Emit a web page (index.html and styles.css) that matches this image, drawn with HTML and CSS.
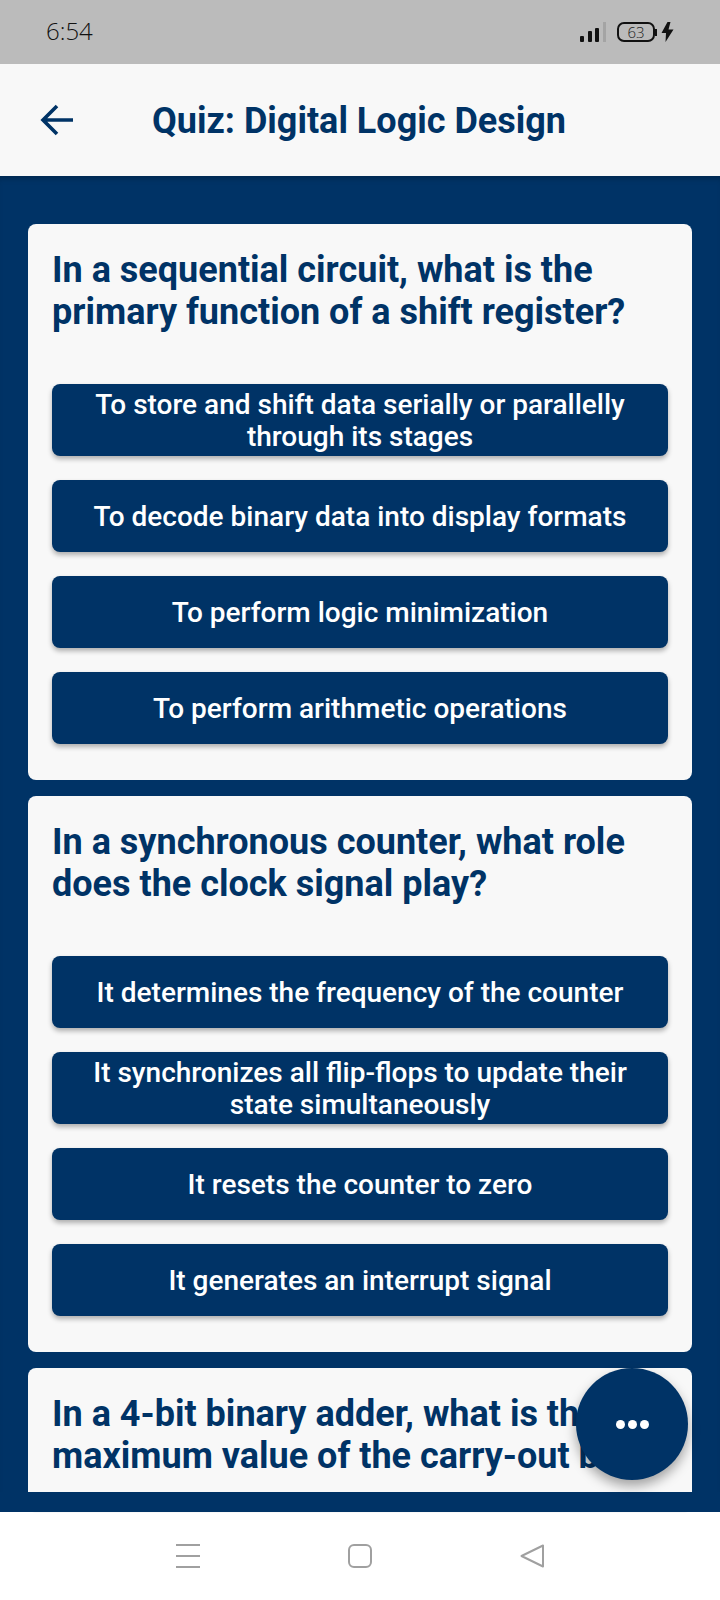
FILE: index.html
```html
<!DOCTYPE html>
<html lang="en">
<head>
<meta charset="utf-8">
<title>Quiz: Digital Logic Design</title>
<link rel="stylesheet" href="styles.css">
</head>
<body>
  <div class="screen">
    <div class="status">
      <span class="time">6:54</span>
      <div class="status-icons">
        <svg class="signal" width="27" height="20" viewBox="0 0 27 20">
          <rect x="0" y="14" width="4" height="6" rx="1" fill="#111"/>
          <rect x="8" y="9" width="4" height="11" rx="1" fill="#111"/>
          <rect x="15" y="6" width="4" height="14" rx="1" fill="#111"/>
          <rect x="23" y="0" width="3" height="20" fill="#a4a4a4"/>
        </svg>
        <div class="battery"><span>63</span></div>
        <div class="battery-tip"></div>
        <svg class="bolt" width="13" height="20" viewBox="0 0 13 20">
          <path d="M6.5 0 L0.5 11 H5 L4.5 20 L12.5 7.5 H7.5 L9.5 0 Z" fill="#111"/>
        </svg>
      </div>
    </div>

    <header class="appbar">
      <svg class="back" width="34" height="32" viewBox="0 0 34 32">
        <path d="M17 2 L3 16 L17 30 M3 16 H33" fill="none" stroke="#003366" stroke-width="3.6"/>
      </svg>
      <h1>Quiz: Digital Logic Design</h1>
    </header>

    <main class="content">
      <section class="card">
        <h2>In a sequential circuit, what is the primary function of a shift register?</h2>
        <div class="options">
          <button class="opt">To store and shift data serially or parallelly through its stages</button>
          <button class="opt">To decode binary data into display formats</button>
          <button class="opt">To perform logic minimization</button>
          <button class="opt">To perform arithmetic operations</button>
        </div>
      </section>
      <section class="card">
        <h2>In a synchronous counter, what role does the clock signal play?</h2>
        <div class="options">
          <button class="opt">It determines the frequency of the counter</button>
          <button class="opt">It synchronizes all flip-flops to update their state simultaneously</button>
          <button class="opt">It resets the counter to zero</button>
          <button class="opt">It generates an interrupt signal</button>
        </div>
      </section>
      <section class="card">
        <h2>In a 4-bit binary adder, what is the maximum value of the carry-out bit?</h2>
      </section>
      <div class="fab"><i></i><i></i><i></i></div>
    </main>

    <nav class="navbar">
      <svg width="24" height="24" viewBox="0 0 24 24">
        <path d="M0 1 H24 M0 12 H24 M0 23 H24" stroke="#a0a0a0" stroke-width="2"/>
      </svg>
      <svg width="24" height="24" viewBox="0 0 24 24">
        <rect x="1" y="1" width="22" height="22" rx="5" fill="none" stroke="#a0a0a0" stroke-width="2"/>
      </svg>
      <svg width="24" height="24" viewBox="0 0 24 24">
        <path d="M23 1.5 V22.5 L1.5 12 Z" fill="none" stroke="#a0a0a0" stroke-width="2" stroke-linejoin="round"/>
      </svg>
    </nav>
  </div>
</body>
</html>
```

FILE: styles.css
```css
* { box-sizing: border-box; }

body {
  margin: 0;
  font-family: Roboto, "Liberation Sans", sans-serif;
}

.screen {
  width: 720px;
  height: 1600px;
  display: flex;
  flex-direction: column;
  overflow: hidden;
  background: #fff;
}

/* status bar */
.status {
  height: 64px;
  flex: none;
  background: #bbbbbb;
  display: flex;
  align-items: center;
  justify-content: space-between;
  padding: 0 46px;
}
.time {
  font-family: "Open Sans", sans-serif;
  font-weight: 300;
  font-size: 24px;
  color: #111;
  margin-bottom: 3px;
}
.status-icons {
  display: flex;
  align-items: center;
}
.signal { margin-right: 10px; }
.battery {
  width: 38px;
  height: 20px;
  border: 2.5px solid #111;
  border-radius: 7px;
  display: flex;
  align-items: center;
  justify-content: center;
}
.battery span {
  font-family: "Open Sans", sans-serif;
  font-weight: 300;
  font-size: 15px;
  color: #222;
}
.battery-tip {
  width: 2px;
  height: 7px;
  background: #111;
  margin-right: 4px;
}
.bolt { display: block; }

/* app bar */
.appbar {
  height: 112px;
  flex: none;
  background: #f8f8f8;
  display: flex;
  align-items: center;
  padding-left: 40px;
}
.appbar h1 {
  margin: 2px 0 0 78px;
  font-size: 36px;
  font-weight: 700;
  color: #003366;
}

/* scrolling list */
.content {
  position: relative;
  height: 1336px;
  flex: none;
  background: #003366;
  padding: 48px 28px 0;
  box-shadow: inset 0 6px 6px -4px rgba(0, 0, 0, 0.25);
}
.content::after {
  content: "";
  position: absolute;
  left: 0;
  right: 0;
  bottom: 0;
  height: 20px;
  background: #003366;
}

.card {
  background: #f8f8f8;
  border-radius: 8px;
  padding: 25px 24px 36px;
  margin-bottom: 16px;
}
.card h2 {
  margin: 0;
  font-size: 36px;
  line-height: 42px;
  font-weight: 700;
  color: #003366;
}

.options {
  margin-top: 51px;
  display: flex;
  flex-direction: column;
  gap: 24px;
}
.opt {
  height: 72px;
  padding: 2px 24px 0;
  border: 0;
  border-radius: 8px;
  background: #003366;
  color: #fff;
  font-family: inherit;
  font-size: 28px;
  line-height: 32px;
  font-weight: 500;
  text-align: center;
  box-shadow: 0 3px 5px rgba(0, 0, 0, 0.3);
}

.fab {
  position: absolute;
  left: 576px;
  top: 1192px;
  z-index: 2;
  width: 112px;
  height: 112px;
  border-radius: 50%;
  background: #003366;
  box-shadow: 0 6px 12px rgba(0, 0, 0, 0.35);
  display: flex;
  align-items: center;
  justify-content: center;
  gap: 3px;
}
.fab i {
  width: 9px;
  height: 9px;
  border-radius: 50%;
  background: #fff;
}

/* bottom nav */
.navbar {
  flex: 1;
  background: #fff;
  display: flex;
  align-items: center;
  justify-content: center;
  gap: 148px;
}
```
